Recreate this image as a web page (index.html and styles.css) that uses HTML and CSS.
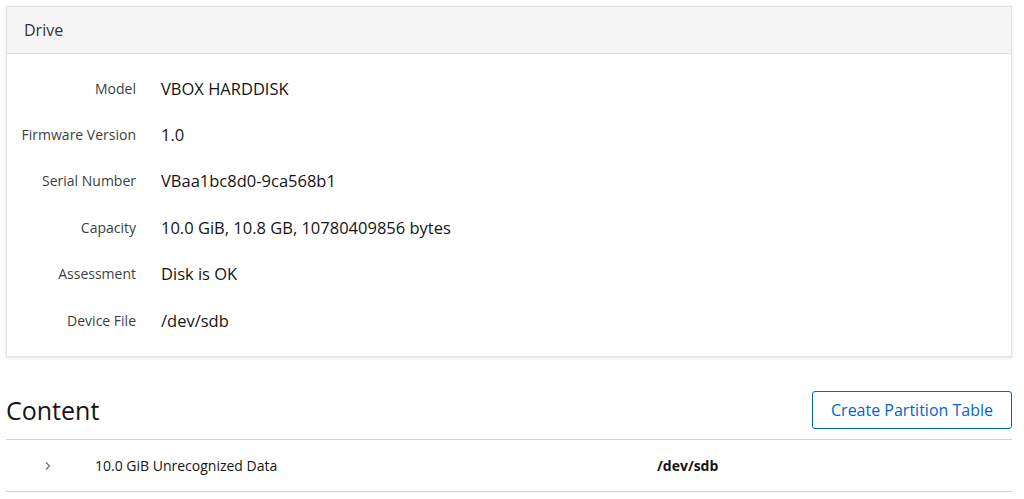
FILE: index.html
```html
<!DOCTYPE html>
<html lang="en">
<head>
    <meta charset="UTF-8">
    <title>Drive</title>
    <link rel="stylesheet" href="styles.css">
</head>
<body>
    <!-- Drive details card -->
    <div class="card">
        <div class="card-header">Drive</div>
        <div class="card-body">
            <div class="info-row"><span class="info-label">Model</span><span class="info-value">VBOX HARDDISK</span></div>
            <div class="info-row"><span class="info-label">Firmware Version</span><span class="info-value">1.0</span></div>
            <div class="info-row"><span class="info-label">Serial Number</span><span class="info-value">VBaa1bc8d0-9ca568b1</span></div>
            <div class="info-row"><span class="info-label">Capacity</span><span class="info-value">10.0 GiB, 10.8 GB, 10780409856 bytes</span></div>
            <div class="info-row"><span class="info-label">Assessment</span><span class="info-value">Disk is OK</span></div>
            <div class="info-row"><span class="info-label">Device File</span><span class="info-value">/dev/sdb</span></div>
        </div>
    </div>

    <!-- Content section -->
    <div class="content">
        <div class="content-head">
            <h2>Content</h2>
            <button class="btn-secondary">Create Partition Table</button>
        </div>
        <div class="content-row">
            <span class="toggle">
                <svg width="10" height="10" viewBox="0 0 10 10"><path d="M3 1.5 L6.5 5 L3 8.5" fill="none" stroke="#6a6e73" stroke-width="1.2"/></svg>
            </span>
            <span class="row-name">10.0 GiB Unrecognized Data</span>
            <span class="row-dev">/dev/sdb</span>
        </div>
    </div>
</body>
</html>
```

FILE: styles.css
```css
body {
    margin: 0;
    padding: 6px 12px 0 6px;
    font-family: "Open Sans", sans-serif;
    color: #151515;
    background: #fff;
}
.card {
    border: 1px solid #e4e4e4;
    box-shadow: 0 1px 3px rgba(0, 0, 0, 0.12);
    background: #fff;
}
.card-header {
    background: #f5f5f5;
    border-bottom: 1px solid #e2e2e2;
    height: 46px;
    line-height: 46px;
    padding-left: 17px;
    font-size: 16px;
    color: #333;
}
.card-body {
    padding: 11px 0 13px 0;
}
.info-row {
    display: flex;
    align-items: center;
    height: 46.4px;
}
.info-label {
    width: 129px;
    text-align: right;
    font-size: 14px;
    color: #3c3f42;
    padding-right: 25px;
}
.info-value {
    font-size: 16.5px;
    color: #151515;
}
.content {
    margin-top: 34px;
}
.content-head {
    display: flex;
    justify-content: space-between;
    align-items: center;
    padding-bottom: 10px;
    border-bottom: 1px solid #d2d2d2;
}
.content-head h2 {
    margin: 0;
    font-size: 25px;
    font-weight: 400;
}
.btn-secondary {
    font-family: "Open Sans", sans-serif;
    font-size: 16px;
    color: #0066cc;
    background: #fff;
    border: 1px solid #0066cc;
    border-radius: 3px;
    height: 38px;
    padding: 0 18px;
}
.content-row {
    display: flex;
    align-items: center;
    height: 51px;
    border-bottom: 1px solid #d2d2d2;
    font-size: 14px;
}
.toggle {
    width: 89px;
    padding-left: 37px;
    box-sizing: border-box;
    display: flex;
}
.row-name {
    width: 562px;
}
.row-dev {
    font-weight: 700;
}
```
